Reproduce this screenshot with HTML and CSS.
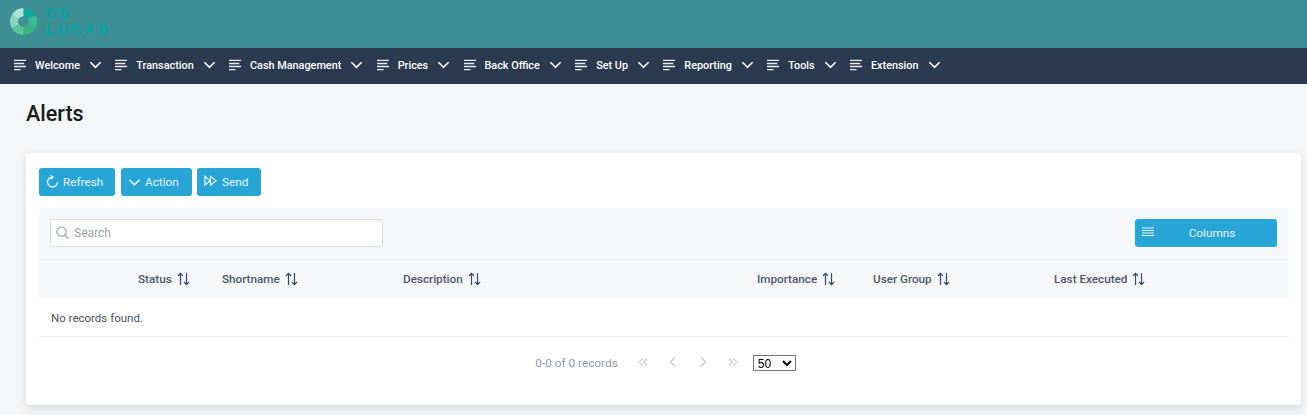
FILE: index.html
```html
<!DOCTYPE html>
<html lang="en">
<head>
<meta charset="utf-8">
<title>Alerts</title>
<link rel="stylesheet" href="styles.css">
</head>
<body>
<svg class="defs" width="0" height="0" aria-hidden="true">
  <symbol id="bars" viewBox="0 0 14 14"><path d="M0 2h13M0 5.400h11M0 8.600h13M0 12h7" fill="none" stroke="currentColor" stroke-width="1.500"/></symbol>
  <symbol id="chev" viewBox="0 0 14 14"><path d="M1.500 4l5.500 5.500L12.500 4" fill="none" stroke="currentColor" stroke-width="1.700"/></symbol>
  <symbol id="sort" viewBox="0 0 13 14"><path d="M3.500 13V1.500M1 4l2.500-2.700L6 4" fill="none" stroke="currentColor" stroke-width="1.200"/><path d="M9.500 1v11.500M7 10l2.500 2.700L12 10" fill="none" stroke="currentColor" stroke-width="1.200"/></symbol>
</svg>
<header class="brand">
  <svg class="logo" viewBox="0 0 28 28" width="27" height="27" aria-hidden="true">
    <path d="M14 0A14 14 0 0 1 26.500 7.700L19 11.500A5.500 5.500 0 0 0 14 8.500Z" fill="#0fa89a"/>
    <path d="M26.500 7.700A14 14 0 0 1 26 21.200L18.700 16.800A5.500 5.500 0 0 0 19 11.500Z" fill="#3dbb94"/>
    <path d="M26 21.200A14 14 0 0 1 14 28L14 19.500A5.500 5.500 0 0 0 18.700 16.800Z" fill="#35b487"/>
    <path d="M14 28A14 14 0 0 1 2 21L9.300 17A5.500 5.500 0 0 0 14 19.500Z" fill="#5cc49a"/>
    <path d="M2 21A14 14 0 0 1 2 7L9.300 11A5.500 5.500 0 0 0 9.300 17Z" fill="#86d4b8"/>
    <path d="M2 7A14 14 0 0 1 14 0L14 8.500A5.500 5.500 0 0 0 9.300 11Z" fill="#aee2dc"/>
  </svg>
  <div class="wordmark"><div class="word">CS</div><div class="word">LUCAS</div></div>
</header>
<nav class="menu">
  <a class="item"><svg class="ico"><use href="#bars"/></svg><span>Welcome</span><svg class="chev"><use href="#chev"/></svg></a>
  <a class="item"><svg class="ico"><use href="#bars"/></svg><span>Transaction</span><svg class="chev"><use href="#chev"/></svg></a>
  <a class="item"><svg class="ico"><use href="#bars"/></svg><span>Cash Management</span><svg class="chev"><use href="#chev"/></svg></a>
  <a class="item"><svg class="ico"><use href="#bars"/></svg><span>Prices</span><svg class="chev"><use href="#chev"/></svg></a>
  <a class="item"><svg class="ico"><use href="#bars"/></svg><span>Back Office</span><svg class="chev"><use href="#chev"/></svg></a>
  <a class="item"><svg class="ico"><use href="#bars"/></svg><span>Set Up</span><svg class="chev"><use href="#chev"/></svg></a>
  <a class="item"><svg class="ico"><use href="#bars"/></svg><span>Reporting</span><svg class="chev"><use href="#chev"/></svg></a>
  <a class="item"><svg class="ico"><use href="#bars"/></svg><span>Tools</span><svg class="chev"><use href="#chev"/></svg></a>
  <a class="item"><svg class="ico"><use href="#bars"/></svg><span>Extension</span><svg class="chev"><use href="#chev"/></svg></a>
</nav>
<main class="page">
  <h1 class="title">Alerts</h1>
  <section class="card">
    <div class="toolbar">
      <button class="btn btn-refresh"><svg class="btn-ico refresh-ico" viewBox="0 0 14 14"><path d="M7 2.300A5.300 5.300 0 1 0 12.300 7.600M5 .2L7.500 2.300 5 4.600" fill="none" stroke="currentColor" stroke-width="1.400"/></svg>Refresh</button>
      <button class="btn btn-action"><svg class="btn-ico" viewBox="0 0 14 14"><use href="#chev"/></svg>Action</button>
      <button class="btn btn-send"><svg class="btn-ico send-ico" viewBox="0 0 14 14"><path d="M1 1.500v9.500l5.500-4.750zM7 1.500v9.500l6-4.750z" fill="none" stroke="currentColor" stroke-width="1.300"/></svg>Send</button>
    </div>
    <div class="caption">
      <label class="search">
        <svg class="search-ico" viewBox="0 0 14 14"><circle cx="6" cy="6" r="5" fill="none" stroke="currentColor" stroke-width="1.100"/><path d="M9.600 9.600L13.500 13.500" fill="none" stroke="currentColor" stroke-width="1.100"/></svg>
        <input class="search-input" type="text" placeholder="Search">
      </label>
      <button class="btn btn-columns"><svg class="col-ico" viewBox="0 0 12 10"><path d="M0 1h12M0 3.500h12M0 6h12M0 8.500h12" fill="none" stroke="currentColor" stroke-width="1"/></svg><span class="col-label">Columns</span></button>
    </div>
    <table class="grid">
      <colgroup>
        <col class="c0"><col class="c1"><col class="c2"><col class="c3"><col class="c4"><col class="c5"><col class="c6">
      </colgroup>
      <thead>
        <tr>
          <th></th>
          <th>Status <svg class="sort"><use href="#sort"/></svg></th>
          <th>Shortname <svg class="sort"><use href="#sort"/></svg></th>
          <th>Description <svg class="sort"><use href="#sort"/></svg></th>
          <th>Importance <svg class="sort"><use href="#sort"/></svg></th>
          <th>User Group <svg class="sort"><use href="#sort"/></svg></th>
          <th>Last Executed <svg class="sort"><use href="#sort"/></svg></th>
        </tr>
      </thead>
      <tbody>
        <tr><td class="empty" colspan="7">No records found.</td></tr>
      </tbody>
    </table>
    <div class="pager">
      <span class="count">0-0 of 0 records</span>
      <svg class="pg pg-first" viewBox="0 0 12 12"><path d="M5.500 2.500L2 6l3.500 3.500M10 2.500L6.500 6l3.500 3.500" fill="none" stroke="currentColor" stroke-width="1.100"/></svg>
      <svg class="pg pg-prev" viewBox="0 0 12 12"><path d="M8 1.500L3.500 6 8 10.500" fill="none" stroke="currentColor" stroke-width="1.300"/></svg>
      <svg class="pg pg-next" viewBox="0 0 12 12"><path d="M4 1.500L8.500 6 4 10.500" fill="none" stroke="currentColor" stroke-width="1.300"/></svg>
      <svg class="pg pg-last" viewBox="0 0 12 12"><path d="M2 2.500L5.500 6 2 9.500M6.500 2.500L10 6l-3.500 3.500" fill="none" stroke="currentColor" stroke-width="1.100"/></svg>
      <select class="size"><option>50</option></select>
    </div>
  </section>
</main>
</body>
</html>
```
FILE: styles.css
```css
* { box-sizing: border-box; }
html, body { margin: 0; padding: 0; }
body {
  height: 415px;
  overflow: hidden;
  background: #f4f7fa;
  font-family: Roboto, "Liberation Sans", sans-serif;
  font-size: 12px;
  color: #495057;
}
.defs { position: absolute; }

.brand {
  height: 48px;
  background: #3e9095;
  display: flex;
  align-items: center;
  padding: 0 0 0 10px;
  gap: 9px;
}
.logo { flex: none; margin-top: -5px; }
.wordmark {
  font-family: "Liberation Sans", sans-serif;
  font-weight: 700;
  font-size: 13.800px;
  letter-spacing: 3.400px;
  -webkit-text-stroke: .4px #06a5a8;
  color: #06a5a8;
  margin-top: -5px;
}
.word { height: 16px; line-height: 16px; }

.menu {
  height: 36px;
  background: #2a3a50;
  display: flex;
  align-items: center;
  padding-left: 14px;
  padding-bottom: 2px;
}
.item {
  display: flex;
  align-items: center;
  color: #fff;
  font-size: 10.850px;
  font-weight: 500;
  margin-right: 13.300px;
}
.ico { width: 13px; height: 14px; margin-right: 8px; color: #e8eaee; }
.chev { width: 13px; height: 14px; margin-left: 9px; color: #fff; }

.page { padding: 0 6px 0 26px; }
.title {
  margin: 0;
  padding-top: 18px;
  height: 69px;
  font-size: 21.500px;
  line-height: 24px;
  font-weight: 500;
  color: #16191d;
}
.card {
  height: 252px;
  background: #fff;
  border-radius: 4px;
  padding: 15px 12px 0 13px;
  box-shadow: 0 3px 8px rgba(0, 0, 0, .12);
}

.toolbar { display: flex; gap: 6px; height: 28px; }
.btn {
  display: inline-flex;
  align-items: center;
  height: 28px;
  border: 0;
  border-radius: 3px;
  background: #26a5d6;
  color: #e9f6fb;
  font-family: inherit;
  font-size: 11.800px;
  font-weight: 400;
  padding: 0;
}
.btn-refresh { width: 76px; padding-left: 7px; }
.btn-action { width: 71px; padding-left: 7px; }
.btn-send { width: 64px; padding-left: 7px; margin-left: -1px; }
.btn-ico { width: 13px; height: 13px; margin-right: 4px; }
.refresh-ico { margin-top: -1px; }
.send-ico { margin-right: 5px; margin-top: -2px; }

.caption {
  margin-top: 12px;
  height: 52px;
  background: #f6f7f9;
  border-bottom: 1px solid #eef0f2;
  border-radius: 4px 4px 0 0;
  display: flex;
  align-items: center;
  justify-content: space-between;
  padding: 0 12px 1px 11px;
}
.search {
  width: 333px;
  height: 28px;
  background: #fff;
  border: 1px solid #d8dbe6;
  border-radius: 3px;
  display: flex;
  align-items: center;
  padding-left: 5px;
}
.search-ico { width: 13px; height: 13px; color: #8a94a6; flex: none; margin-right: 5px; margin-top: -1px; }
.search-input {
  border: 0;
  outline: 0;
  background: transparent;
  font-family: inherit;
  font-size: 12px;
  flex: 1;
  min-width: 0;
  padding: 0;
}
.search-input::placeholder { color: #9aa0ac; opacity: 1; }
.btn-columns { width: 142px; padding-left: 7px; }
.col-ico { width: 12px; height: 10px; flex: none; margin-top: -2px; }
.col-label { flex: 1; text-align: center; padding-right: 7px; }

.grid {
  width: 1250px;
  table-layout: fixed;
  border-collapse: collapse;
}
.c0 { width: 87px; }
.c1 { width: 84px; }
.c2 { width: 181px; }
.c3 { width: 354px; }
.c4 { width: 116px; }
.c5 { width: 181px; }
.c6 { width: 247px; }
.grid th {
  height: 39px;
  background: #f6f7f9;
  text-align: left;
  padding: 0 12px 2px;
  font-weight: 500;
  font-size: 11.700px;
  color: #4f566b;
  white-space: nowrap;
}
.sort { width: 13px; height: 14px; vertical-align: -3px; margin-left: 2px; color: #2f4a75; }
.grid td {
  height: 37px;
  padding: 2px 12px 0;
  border-bottom: 1px solid #e9ecef;
  color: #4a5260;
  font-size: 11.500px;
}

.pager {
  display: flex;
  align-items: center;
  justify-content: center;
  height: 52px;
  padding-left: 5px;
  padding-right: 2px;
}
.count { color: #8b9bb0; margin-right: 19px; font-size: 11.800px; }
.pg { width: 12px; height: 12px; color: #c4c9d4; margin-right: 18px; margin-top: -2px; }
.pg-last { margin-right: 14px; }
.size {
  width: 43px;
  height: 16px;
  font-family: "Liberation Sans", sans-serif;
  font-size: 12px;
  background: #fff;
  color: #000;
  border: 1px solid #767676;
  border-radius: 0;
  padding: 0;
}
```
